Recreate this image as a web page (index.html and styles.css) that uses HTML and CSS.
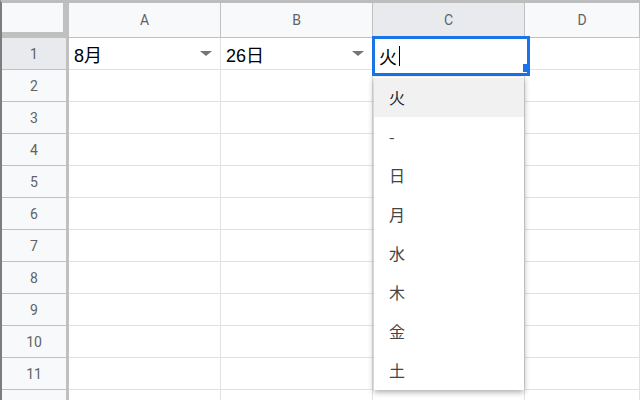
FILE: index.html
```html
<!DOCTYPE html>
<html lang="ja">
<head>
    <meta charset="UTF-8">
    <title>Sheet</title>
    <link rel="stylesheet" href="styles.css">
</head>
<body>
    <div class="sheet">
        <div class="corner"></div>
        <div class="col-head">A</div>
        <div class="col-head">B</div>
        <div class="col-head active">C</div>
        <div class="col-head">D</div>

        <div class="row-head active">1</div>
        <div class="cell"><span>8月</span><i class="arrow"></i></div>
        <div class="cell"><span>26日</span><i class="arrow"></i></div>
        <div class="cell"></div>
        <div class="cell"></div>

        <div class="row-head">2</div><div class="cell"></div><div class="cell"></div><div class="cell"></div><div class="cell"></div>
        <div class="row-head">3</div><div class="cell"></div><div class="cell"></div><div class="cell"></div><div class="cell"></div>
        <div class="row-head">4</div><div class="cell"></div><div class="cell"></div><div class="cell"></div><div class="cell"></div>
        <div class="row-head">5</div><div class="cell"></div><div class="cell"></div><div class="cell"></div><div class="cell"></div>
        <div class="row-head">6</div><div class="cell"></div><div class="cell"></div><div class="cell"></div><div class="cell"></div>
        <div class="row-head">7</div><div class="cell"></div><div class="cell"></div><div class="cell"></div><div class="cell"></div>
        <div class="row-head">8</div><div class="cell"></div><div class="cell"></div><div class="cell"></div><div class="cell"></div>
        <div class="row-head">9</div><div class="cell"></div><div class="cell"></div><div class="cell"></div><div class="cell"></div>
        <div class="row-head">10</div><div class="cell"></div><div class="cell"></div><div class="cell"></div><div class="cell"></div>
        <div class="row-head">11</div><div class="cell"></div><div class="cell"></div><div class="cell"></div><div class="cell"></div>
        <div class="row-head"></div><div class="cell"></div><div class="cell"></div><div class="cell"></div><div class="cell"></div>

        <!-- Eingabezelle C1 -->
        <div class="editor">火<span class="caret"></span></div>
        <div class="fill-handle"></div>

        <div class="suggest">
            <div class="item selected">火</div>
            <div class="item">-</div>
            <div class="item">日</div>
            <div class="item">月</div>
            <div class="item">水</div>
            <div class="item">木</div>
            <div class="item">金</div>
            <div class="item">土</div>
        </div>
    </div>
</body>
</html>
```

FILE: styles.css
```css
body {
    margin: 0;
    padding: 0;
    width: 640px;
    height: 400px;
    overflow: hidden;
    background-color: #fff;
    font-family: Roboto, "Noto Sans CJK JP", sans-serif;
}
.sheet {
    position: relative;
    display: grid;
    grid-template-columns: 67px 152px 152px 152px 1fr;
    grid-template-rows: 35px;
    grid-auto-rows: 32px;
    border-top: 3px solid #bdbdbd;
    border-left: 2px solid #7d7d7d;
    height: 400px;
    box-sizing: border-box;
}
.corner {
    background-color: #f8f9fa;
    border-right: 6px solid #c0c0c0;
    border-bottom: 6px solid #c0c0c0;
}
.col-head {
    display: flex;
    align-items: center;
    justify-content: center;
    background-color: #f8f9fa;
    border-right: 1px solid #c0c0c0;
    border-bottom: 1px solid #c0c0c0;
    color: #5f6368;
    font-size: 14px;
}
.col-head.active {
    background-color: #e8eaed;
}
.row-head {
    display: flex;
    align-items: center;
    justify-content: center;
    background-color: #f8f9fa;
    border-right: 3px solid #c0c0c0;
    border-bottom: 1px solid #c0c0c0;
    color: #5f6368;
    font-size: 14px;
}
.row-head.active {
    background-color: #e8eaed;
}
.cell {
    display: flex;
    align-items: center;
    justify-content: space-between;
    padding: 0 8px 0 5px;
    border-right: 1px solid #e2e2e2;
    border-bottom: 1px solid #e2e2e2;
    font-family: "Liberation Sans", "Noto Sans CJK JP", sans-serif;
    font-size: 18px;
    color: #000;
}
.arrow {
    width: 0;
    height: 0;
    border-left: 6px solid transparent;
    border-right: 6px solid transparent;
    border-top: 5px solid #757575;
}
.editor {
    position: absolute;
    left: 370px;
    top: 33px;
    width: 148px;
    height: 34px;
    border: 3px solid #1a73e8;
    background-color: #fff;
    display: flex;
    align-items: center;
    padding-left: 4px;
    font-family: "Liberation Sans", "Noto Sans CJK JP", sans-serif;
    font-size: 18px;
    color: #000;
}
.caret {
    width: 1px;
    height: 20px;
    margin-left: 2px;
    background-color: #000;
}
.fill-handle {
    position: absolute;
    left: 521px;
    top: 61px;
    width: 5px;
    height: 8px;
    background-color: #1a73e8;
}
.suggest {
    position: absolute;
    left: 372px;
    top: 74px;
    width: 150px;
    background-color: #fff;
    box-shadow: 0px 2px 6px rgba(0, 0, 0, 0.35);
    padding: 1px 0 0 0;
}
.item {
    height: 39px;
    line-height: 39px;
    padding-left: 15px;
    font-family: "Noto Sans CJK JP", sans-serif;
    font-size: 16px;
    color: #444;
}
.item.selected {
    background-color: #f1f1f1;
    color: #202124;
}
```
